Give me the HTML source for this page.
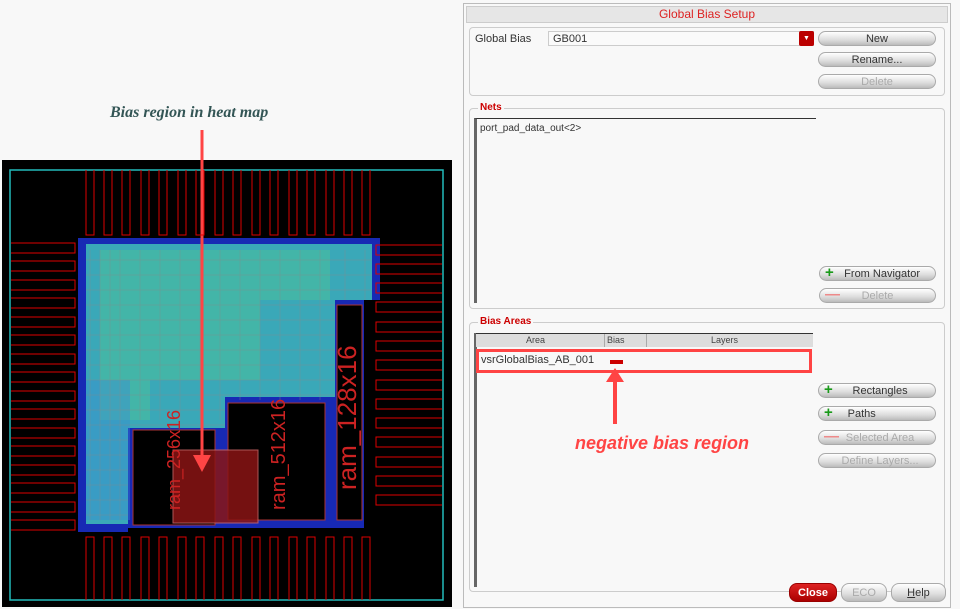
<!DOCTYPE html>
<html><head><style>
body{margin:0;width:960px;height:609px;background:#f8f8f8;position:relative;overflow:hidden;font-family:"Liberation Sans",sans-serif}
.a{position:absolute}
.btn{position:absolute;height:15px;border:1px solid #aaa;border-radius:8px;background:linear-gradient(#fff,#ddd 60%,#bbb);font-size:11px;color:#333;text-align:center;line-height:15px;box-sizing:border-box}
.dis{color:#aaa}
.plus{color:#1a9a1a;font-weight:bold;font-size:15px;position:absolute;left:5px;top:-2px}
.fs{position:absolute;border:1px solid #ccc;border-radius:4px}
.lg{position:absolute;background:#f8f8f8;color:#c00;font-weight:bold;font-size:10px;padding:0 2px}
</style></head><body>
<div class="a" style="left:110px;top:104px;font:italic bold 16px 'Liberation Serif',serif;color:#355">Bias region in heat map</div>
<svg class="a" style="left:0;top:0" width="460" height="609">
<rect x="2" y="160" width="450" height="447" fill="#000"/>
<rect x="10" y="170" width="433" height="430" fill="none" stroke="#2bb" stroke-width="1.5"/>
<path d="M78 238 H380 V300 H364 V528 H128 V532 H78 Z" fill="#1a2ec8" opacity=".9"/>
<path d="M86 244 H372 V300 H335 V397 H225 V428 H128 V524 H86 Z" fill="#3aa8b8"/>
<path d="M100 250 H330 V300 H260 V380 H150 V420 H100 Z" fill="#4bbf9a" opacity=".55"/>
<path d="M86 380 H130 V520 H86 Z" fill="#3a8ad8" opacity=".4"/>
<g stroke="#888" stroke-width=".5" opacity=".7">
<path d="M90 250V520M100 250V520M110 250V520M120 250V520M140 250V420M160 250V420M180 250V420M200 250V420M220 250V420M240 250V400M260 250V400M280 250V400M300 250V400M320 250V400M345 250V300M365 250V300"/>
<path d="M86 260H372M86 275H372M86 290H372M86 305H335M86 320H335M86 335H335M86 350H335M86 365H335M86 380H335M86 395H335M86 410H225M86 425H225M86 440H128M86 455H128M86 470H128M86 485H128M86 500H128M86 515H128"/>
</g>
<rect x="133" y="430" width="82" height="95" fill="#000" stroke="#a33"/>
<rect x="228" y="403" width="97" height="117" fill="#000" stroke="#a33"/>
<rect x="337" y="305" width="25" height="215" fill="#000" stroke="#a33"/>
<rect x="173" y="450" width="85" height="73" fill="#8a1414" opacity=".85" stroke="#c66"/>
<g fill="#c22" font-family="Liberation Sans">
<text transform="translate(356 490) rotate(-90)" font-size="26">ram_128x16</text>
<text transform="translate(285 510) rotate(-90)" font-size="20">ram_512x16</text>
<text transform="translate(180 510) rotate(-90)" font-size="18">ram_256x16</text>
</g>
<line x1="202" y1="130" x2="202" y2="462" stroke="#f44" stroke-width="3"/>
<path d="M193 455 L202 472 L211 455 Z" fill="#f44"/>
<g fill="none" stroke="#d00" stroke-width="1">
<path d="M86 170v65h8v-65M104 170v65h8v-65M122 170v65h8v-65M141 170v65h8v-65M159 170v65h8v-65M178 170v65h8v-65M196 170v65h8v-65M215 170v65h8v-65M233 170v65h8v-65M252 170v65h8v-65M270 170v65h8v-65M289 170v65h8v-65M307 170v65h8v-65M326 170v65h8v-65M344 170v65h8v-65M362 170v65h8v-65"/>
<path d="M86 600v-63h8v63M104 600v-63h8v63M122 600v-63h8v63M141 600v-63h8v63M159 600v-63h8v63M178 600v-63h8v63M196 600v-63h8v63M215 600v-63h8v63M233 600v-63h8v63M252 600v-63h8v63M270 600v-63h8v63M289 600v-63h8v63M307 600v-63h8v63M326 600v-63h8v63M344 600v-63h8v63M362 600v-63h8v63"/>
<path d="M11 243h64v10h-64M11 261h64v10h-64M11 280h64v10h-64M11 298h64v10h-64M11 317h64v10h-64M11 335h64v10h-64M11 354h64v10h-64M11 372h64v10h-64M11 391h64v10h-64M11 409h64v10h-64M11 428h64v10h-64M11 446h64v10h-64M11 465h64v10h-64M11 483h64v10h-64M11 502h64v10h-64M11 520h64v10h-64"/>
<path d="M442 245h-66v10h66M442 264h-66v10h66M442 283h-66v10h66M442 302h-66v10h66M442 322h-66v10h66M442 341h-66v10h66M442 360h-66v10h66M442 380h-66v10h66M442 399h-66v10h66M442 418h-66v10h66M442 437h-66v10h66M442 457h-66v10h66M442 476h-66v10h66M442 495h-66v10h66"/>
</g>
</svg>
<div class="a" style="left:463px;top:3px;width:486px;height:603px;border:1px solid #bbb;background:#f8f8f8"></div>
<div class="a" style="left:466px;top:6px;width:480px;height:15px;background:#e6e6e6;border:1px solid #ccc;text-align:center;color:#d22;font-size:12px;line-height:15px">Global Bias Setup</div>
<div class="fs" style="left:469px;top:27px;width:474px;height:67px"></div>
<div class="a" style="left:475px;top:33px;font-size:11px;color:#333">Global Bias</div>
<div class="a" style="left:548px;top:31px;width:266px;height:15px;border:1px solid #ccc;background:#fafafa;font-size:11px;line-height:15px;color:#333;padding-left:4px;box-sizing:border-box">GB001</div>
<div class="a" style="left:799px;top:31px;width:15px;height:15px;background:#b00;border-radius:2px;color:#fff;font-size:7px;text-align:center;line-height:15px">▼</div>
<div class="btn" style="left:818px;top:31px;width:118px">New</div>
<div class="btn" style="left:818px;top:52px;width:118px">Rename...</div>
<div class="btn dis" style="left:818px;top:74px;width:118px">Delete</div>
<div class="fs" style="left:469px;top:108px;width:474px;height:199px"></div>
<div class="lg" style="left:478px;top:102px">Nets</div>
<div class="a" style="left:474px;top:118px;width:342px;height:185px;border-top:1px solid #333;border-left:3px solid #666;font-size:10px;color:#333;padding:4px 0 0 3px;box-sizing:border-box">port_pad_data_out&lt;2&gt;</div>
<div class="btn" style="left:819px;top:266px;width:117px">&nbsp;&nbsp;&nbsp;From Navigator<span class="plus">+</span></div>
<div class="btn dis" style="left:819px;top:288px;width:117px">Delete<span class="plus" style="color:#e88">—</span></div>
<div class="fs" style="left:469px;top:322px;width:474px;height:268px"></div>
<div class="lg" style="left:478px;top:316px">Bias Areas</div>
<div class="a" style="left:474px;top:333px;width:3px;height:254px;background:#666"></div>
<div class="a" style="left:476px;top:333px;width:337px;height:13px;background:#ddd;border-top:1px solid #333;font-size:9px;color:#444;line-height:13px"><span style="position:absolute;left:50px">Area</span><span style="position:absolute;left:128px;border-left:1px solid #aaa;padding-left:2px">Bias</span><span style="position:absolute;left:170px;border-left:1px solid #aaa;width:1px;height:13px"></span><span style="position:absolute;left:235px">Layers</span></div>
<div class="a" style="left:476px;top:349px;width:336px;height:24px;border:3px solid #f44;box-sizing:border-box"></div>
<div class="a" style="left:481px;top:354px;font-size:11px;color:#333">vsrGlobalBias_AB_001</div>
<div class="a" style="left:610px;top:360px;width:13px;height:4px;background:#c00"></div>
<svg class="a" style="left:600px;top:366px" width="30" height="60"><line x1="15" y1="10" x2="15" y2="58" stroke="#f44" stroke-width="4"/><path d="M6 16 L15 2 L24 16Z" fill="#f44"/></svg>
<div class="a" style="left:575px;top:433px;font:italic bold 18px 'Liberation Sans',sans-serif;color:#f44">negative bias region</div>
<div class="btn" style="left:818px;top:383px;width:118px">&nbsp;&nbsp;Rectangles<span class="plus">+</span></div>
<div class="btn" style="left:818px;top:406px;width:118px">&nbsp;Paths&nbsp;&nbsp;&nbsp;&nbsp;&nbsp;&nbsp;&nbsp;&nbsp;&nbsp;&nbsp;&nbsp;<span class="plus">+</span></div>
<div class="btn dis" style="left:818px;top:430px;width:118px">&nbsp;&nbsp;Selected Area<span class="plus" style="color:#e88">—</span></div>
<div class="btn dis" style="left:818px;top:453px;width:118px">&nbsp;&nbsp;Define Layers...</div>
<div class="btn" style="left:789px;top:583px;width:48px;height:19px;line-height:19px;background:linear-gradient(#d22,#a00);color:#fff;font-weight:bold;border-color:#900">Close</div>
<div class="btn dis" style="left:841px;top:583px;width:46px;height:19px;line-height:19px">ECO</div>
<div class="btn" style="left:891px;top:583px;width:55px;height:19px;line-height:19px"><u>H</u>elp</div>
</body></html>
